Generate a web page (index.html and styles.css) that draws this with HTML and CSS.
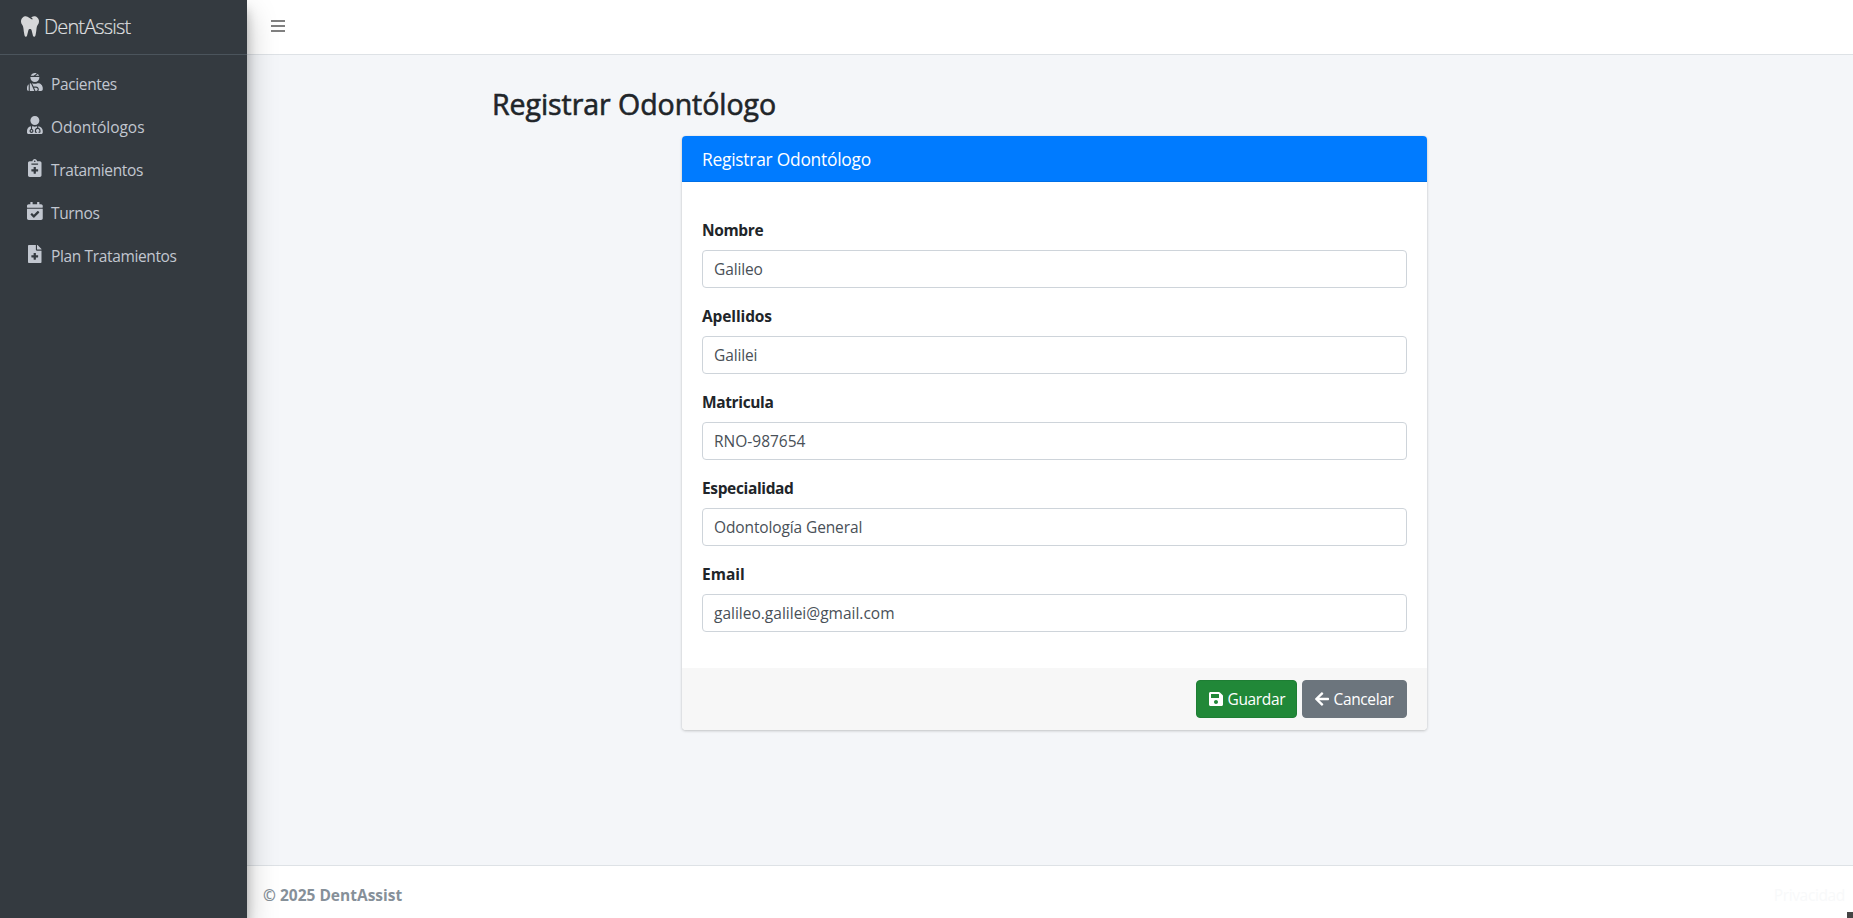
FILE: index.html
```html
<!DOCTYPE html>
<html lang="es">
<head>
<meta charset="utf-8">
<title>Registrar Odontólogo - DentAssist</title>
<link rel="stylesheet" href="styles.css">
</head>
<body>
<div class="wrapper">
  <aside class="sidebar">
    <a class="brand">
      <svg class="brand-icon" viewBox="0 0 448 512"><path d="M443.98 96.25c-11.01-45.22-47.11-82.06-92.01-93.72-32.19-8.36-63 5.1-89.14 24.33-3.25 2.39-6.96 3.73-10.5 5.48l28.32 18.21c7.42 4.77 9.58 14.67 4.8 22.11-4.46 6.95-14.27 9.86-22.11 4.8L162.83 12.84c-20.7-10.85-43.38-16.4-66.81-10.31-44.9 11.67-81 48.5-92.01 93.72-10.13 41.62-.42 80.81 21.5 110.43 23.36 31.57 32.68 68.66 36.29 107.35 4.4 47.16 10.33 94.16 20.94 140.32l7.8 33.95c3.19 13.87 15.49 23.7 29.67 23.7 13.97 0 26.15-9.55 29.54-23.16l34.47-138.42c4.56-18.32 20.96-31.16 39.76-31.16s35.2 12.85 39.76 31.16l34.47 138.42c3.39 13.61 15.57 23.16 29.54 23.16 14.18 0 26.48-9.83 29.67-23.7l7.8-33.95c10.61-46.15 16.53-93.16 20.94-140.32 3.61-38.7 12.93-75.78 36.29-107.35 21.95-29.61 31.66-68.8 21.53-110.42z"/></svg>
      <span class="brand-text">DentAssist</span>
    </a>
    <nav class="nav">
      <a class="nav-link"><span class="nav-icon"><svg viewBox="0 0 448 512"><path d="M277.37 11.98C261.08 4.47 243.11 0 224 0c-53.69 0-99.5 33.13-118.51 80h81.19l90.69-68.02zM342.51 80c-7.9-19.47-20.67-36.2-36.49-49.52L239.99 80h102.52zM224 256c70.69 0 128-57.31 128-128 0-5.48-.95-10.7-1.61-16H97.61c-.67 5.3-1.61 10.52-1.61 16 0 70.69 57.31 128 128 128zM80 299.7V512h128.26l-98.45-221.52A132.835 132.835 0 0 0 80 299.7zM0 464c0 26.51 21.49 48 48 48V320.24C18.88 344.89 0 381.26 0 422.4V464zm256-48h-55.38l42.67 96H256c26.47 0 48-21.53 48-48s-21.53-48-48-48zm57.6-128h-16.71c-22.24 10.18-46.88 16-72.89 16s-50.65-5.82-72.89-16h-7.37l42.67 96H256c44.11 0 80 35.89 80 80 0 18.08-6.26 34.59-16.41 48H400c26.51 0 48-21.49 48-48v-41.6c0-74.23-60.17-134.4-134.4-134.4z"/></svg></span><span class="tight">Pacientes</span></a>
      <a class="nav-link"><span class="nav-icon"><svg viewBox="0 0 448 512"><path d="M224 256c70.7 0 128-57.3 128-128S294.7 0 224 0 96 57.3 96 128s57.3 128 128 128zM104 424c0 13.3 10.7 24 24 24s24-10.7 24-24-10.7-24-24-24-24 10.7-24 24zm216-135.4v49c36.5 7.4 64 39.8 64 78.4v41.7c0 7.6-5.4 14.2-12.9 15.7l-32.2 6.4c-4.3.9-8.5-1.9-9.4-6.3l-3.1-15.7c-.9-4.3 1.9-8.6 6.3-9.4l19.3-3.9V416c0-62.8-96-65.1-96 1.9v26.7l19.3 3.9c4.3.9 7.1 5.1 6.3 9.4l-3.1 15.7c-.9 4.3-5.1 7.1-9.4 6.3l-31.2-4.2c-7.9-1.1-13.8-7.8-13.8-15.9V416c0-38.6 27.5-70.9 64-78.4v-45.2c-2.2.7-4.4 1.1-6.6 1.9-18 6.3-37.3 9.8-57.4 9.8s-39.4-3.5-57.4-9.8c-7.4-2.6-14.9-4.2-22.6-5.2v81.6c23.1 6.9 40 28.1 40 53.4 0 30.9-25.1 56-56 56s-56-25.1-56-56c0-25.3 16.9-46.5 40-53.4v-80.4C48.5 301 0 355.8 0 422.4v44.8C0 491.9 20.1 512 44.8 512h358.4c24.7 0 44.8-20.1 44.8-44.8v-44.8c0-72-56.8-130.3-128-133.8z"/></svg></span><span>Odontólogos</span></a>
      <a class="nav-link"><span class="nav-icon"><svg viewBox="0 0 384 512"><path d="M336 64h-80c0-35.3-28.7-64-64-64s-64 28.7-64 64H48C21.5 64 0 85.5 0 112v352c0 26.5 21.5 48 48 48h288c26.5 0 48-21.5 48-48V112c0-26.5-21.5-48-48-48zM192 40c13.3 0 24 10.7 24 24s-10.7 24-24 24-24-10.7-24-24 10.7-24 24-24zm96 304c0 4.4-3.6 8-8 8h-56v56c0 4.4-3.6 8-8 8h-48c-4.4 0-8-3.6-8-8v-56h-56c-4.4 0-8-3.6-8-8v-48c0-4.4 3.6-8 8-8h56v-56c0-4.4 3.6-8 8-8h48c4.4 0 8 3.6 8 8v56h56c4.4 0 8 3.6 8 8v48zm0-192c0 4.4-3.6 8-8 8H104c-4.4 0-8-3.6-8-8v-16c0-4.4 3.6-8 8-8h176c4.4 0 8 3.6 8 8v16z"/></svg></span><span class="tight">Tratamientos</span></a>
      <a class="nav-link"><span class="nav-icon"><svg viewBox="0 0 448 512"><path d="M436 160H12c-6.627 0-12-5.373-12-12v-36c0-26.51 21.49-48 48-48h48V12c0-6.627 5.373-12 12-12h40c6.627 0 12 5.373 12 12v52h128V12c0-6.627 5.373-12 12-12h40c6.627 0 12 5.373 12 12v52h48c26.51 0 48 21.49 48 48v36c0 6.627-5.373 12-12 12zM12 192h424c6.627 0 12 5.373 12 12v260c0 26.51-21.49 48-48 48H48c-26.51 0-48-21.49-48-48V204c0-6.627 5.373-12 12-12zm333.296 95.947l-28.169-28.398c-4.667-4.705-12.265-4.736-16.97-.068L194.12 364.665l-45.98-46.352c-4.667-4.705-12.266-4.736-16.971-.068l-28.397 28.17c-4.705 4.667-4.736 12.265-.068 16.97l82.601 83.269c4.667 4.705 12.265 4.736 16.97.068l142.953-141.805c4.705-4.667 4.736-12.265.068-16.97z"/></svg></span><span class="tight">Turnos</span></a>
      <a class="nav-link"><span class="nav-icon"><svg viewBox="0 0 384 512"><path d="M377 105L279.1 7c-4.5-4.5-10.6-7-17-7H256v128h128v-6.1c0-6.3-2.5-12.4-7-16.9zm-153 31V0H24C10.7 0 0 10.7 0 24v464c0 13.3 10.7 24 24 24h336c13.3 0 24-10.7 24-24V160H248c-13.2 0-24-10.8-24-24zm64 160v48c0 4.4-3.6 8-8 8h-56v56c0 4.4-3.6 8-8 8h-48c-4.4 0-8-3.6-8-8v-56h-56c-4.4 0-8-3.6-8-8v-48c0-4.4 3.6-8 8-8h56v-56c0-4.4 3.6-8 8-8h48c4.4 0 8 3.6 8 8v56h56c4.4 0 8 3.6 8 8z"/></svg></span><span class="tight">Plan Tratamientos</span></a>
    </nav>
  </aside>
  <div class="page">
    <header class="topbar">
      <svg class="bars" viewBox="0 0 14 12"><path d="M0 0h14v2H0zM0 5h14v2H0zM0 10h14v2H0z"/></svg>
    </header>
    <main class="content">
      <h1 class="title">Registrar Odontólogo</h1>
      <form class="card">
        <div class="card-header">Registrar Odontólogo</div>
        <div class="card-body">
          <div class="field"><label class="label tight">Nombre</label><div class="control snug">Galileo</div></div>
          <div class="field"><label class="label snug">Apellidos</label><div class="control snug">Galilei</div></div>
          <div class="field"><label class="label tight">Matricula</label><div class="control">RNO-987654</div></div>
          <div class="field"><label class="label tight">Especialidad</label><div class="control snug">Odontología General</div></div>
          <div class="field"><label class="label">Email</label><div class="control">galileo.galilei@gmail.com</div></div>
        </div>
        <div class="card-footer">
          <button type="button" class="btn btn-save"><svg viewBox="0 0 448 512"><path d="M433.941 129.941l-83.882-83.882A48 48 0 0 0 316.118 32H48C21.49 32 0 53.49 0 80v352c0 26.51 21.49 48 48 48h352c26.51 0 48-21.49 48-48V163.882a48 48 0 0 0-14.059-33.941zM224 416c-35.346 0-64-28.654-64-64 0-35.346 28.654-64 64-64s64 28.654 64 64c0 35.346-28.654 64-64 64zm96-304.52V212c0 6.627-5.373 12-12 12H76c-6.627 0-12-5.373-12-12V108c0-6.627 5.373-12 12-12h228.52c3.183 0 6.235 1.264 8.485 3.515l3.48 3.48A11.996 11.996 0 0 1 320 111.48z"/></svg><span class="tight">Guardar</span></button>
          <button type="button" class="btn btn-cancel"><svg viewBox="0 0 448 512"><path d="M257.5 445.1l-22.2 22.2c-9.4 9.4-24.6 9.4-33.9 0L7 273c-9.4-9.4-9.4-24.6 0-33.9L201.4 44.7c9.4-9.4 24.6-9.4 33.9 0l22.2 22.2c9.5 9.5 9.3 25-.4 34.3L136.6 216H424c13.3 0 24 10.7 24 24v32c0 13.3-10.7 24-24 24H136.6l120.5 114.8c9.8 9.3 10 24.8.4 34.3z"/></svg><span class="tight">Cancelar</span></button>
        </div>
      </form>
    </main>
    <footer class="footer">
      <strong>© 2025 DentAssist</strong>
      <a class="privacy tight">Privacidad</a>
    </footer>
  </div>
</div>
<div class="corner"></div>
</body>
</html>
```

FILE: styles.css
```css
* { box-sizing: border-box; }
body {
  margin: 0;
  font-family: "Open Sans", "Noto Sans", sans-serif;
  font-size: 15.5px;
  line-height: 24px;
  color: #212529;
  overflow: hidden;
}
svg { fill: currentColor; display: block; flex: none; }
.tight { letter-spacing: -.36px; }
.snug { letter-spacing: -.12px; }
.wrapper { display: flex; height: 918px; background: #f4f6f9; }

.sidebar {
  width: 247px;
  flex: none;
  z-index: 1;
  background: #343a40;
  color: #c2c7d0;
  box-shadow: 0 14px 28px rgba(0,0,0,.25), 0 10px 10px rgba(0,0,0,.22);
}
.brand {
  display: flex;
  align-items: center;
  gap: 5px;
  height: 55px;
  padding: 0 0 1px 21px;
  border-bottom: 1px solid #4b545c;
  color: rgba(255,255,255,.8);
}
.brand-icon { width: 18px; height: 21px; margin-bottom: 1px; }
.brand-text { font-size: 20px; font-weight: 300; letter-spacing: -.85px; -webkit-text-stroke: .2px; padding-top: 1px; }
.nav { display: flex; flex-direction: column; gap: 3.2px; padding: 8px 8px 0; }
.nav-link { display: flex; align-items: center; height: 40px; padding: 1px 0 0 16px; }
.nav-icon { display: flex; justify-content: center; width: 22px; margin-right: 5px; padding-bottom: 4px; }
.nav-icon svg { height: 18px; }

.page { flex: 1; display: flex; flex-direction: column; }
.topbar {
  height: 55px;
  padding: 20px 24px;
  background: #fff;
  border-bottom: 1px solid #dee2e6;
  color: #808080;
}
.bars { width: 14px; height: 12px; }
.content { flex: 1; padding: 31px 245px 0; }
.title {
  margin: 0;
  height: 50px;
  font-size: 28.5px;
  font-weight: 500;
  line-height: 36px;
  letter-spacing: -.05px;
  -webkit-text-stroke: .6px;
}
.card {
  width: 745px;
  margin-left: 190px;
  background: #fff;
  border-radius: 4px;
  box-shadow: 0 0 1px rgba(0,0,0,.125), 0 1px 3px rgba(0,0,0,.2);
}
.card-header {
  height: 46px;
  padding: 11px 20px;
  background: #007bff;
  border-bottom: 1px solid #006fe6;
  border-radius: 4px 4px 0 0;
  color: #fff;
  font-size: 17.4px;
  letter-spacing: -.25px;
}
.card-body { display: flex; flex-direction: column; gap: 16px; height: 486px; padding: 36px 20px 0; }
.label { display: block; height: 32px; font-weight: 700; }
.control {
  height: 38px;
  padding: 6px 11px;
  border: 1px solid #ced4da;
  border-radius: 4px;
  color: #495057;
}
.card-footer {
  display: flex;
  justify-content: flex-end;
  gap: 5px;
  height: 62px;
  padding: 12px 20px;
  background: #f7f7f7;
  border-radius: 0 0 4px 4px;
}
.btn {
  display: flex;
  align-items: center;
  gap: 4.5px;
  height: 38px;
  padding: 0 12px;
  border: 1px solid;
  border-radius: 4px;
  color: #fff;
  font: inherit;
}
.btn svg { width: 14px; height: 16px; }
.btn-save { width: 101px; background: #218838; border-color: #1e7e34; }
.btn-cancel { width: 105px; background: #6c757d; border-color: #6c757d; }
.footer {
  display: flex;
  justify-content: space-between;
  height: 53px;
  padding: 17px 8px 0 16px;
  background: #fff;
  border-top: 1px solid #dee2e6;
  color: #869099;
}
.privacy { color: #f8f9fa; }
.corner { position: absolute; right: 0; bottom: 0; width: 6px; height: 6px; background: #454545; }
```
